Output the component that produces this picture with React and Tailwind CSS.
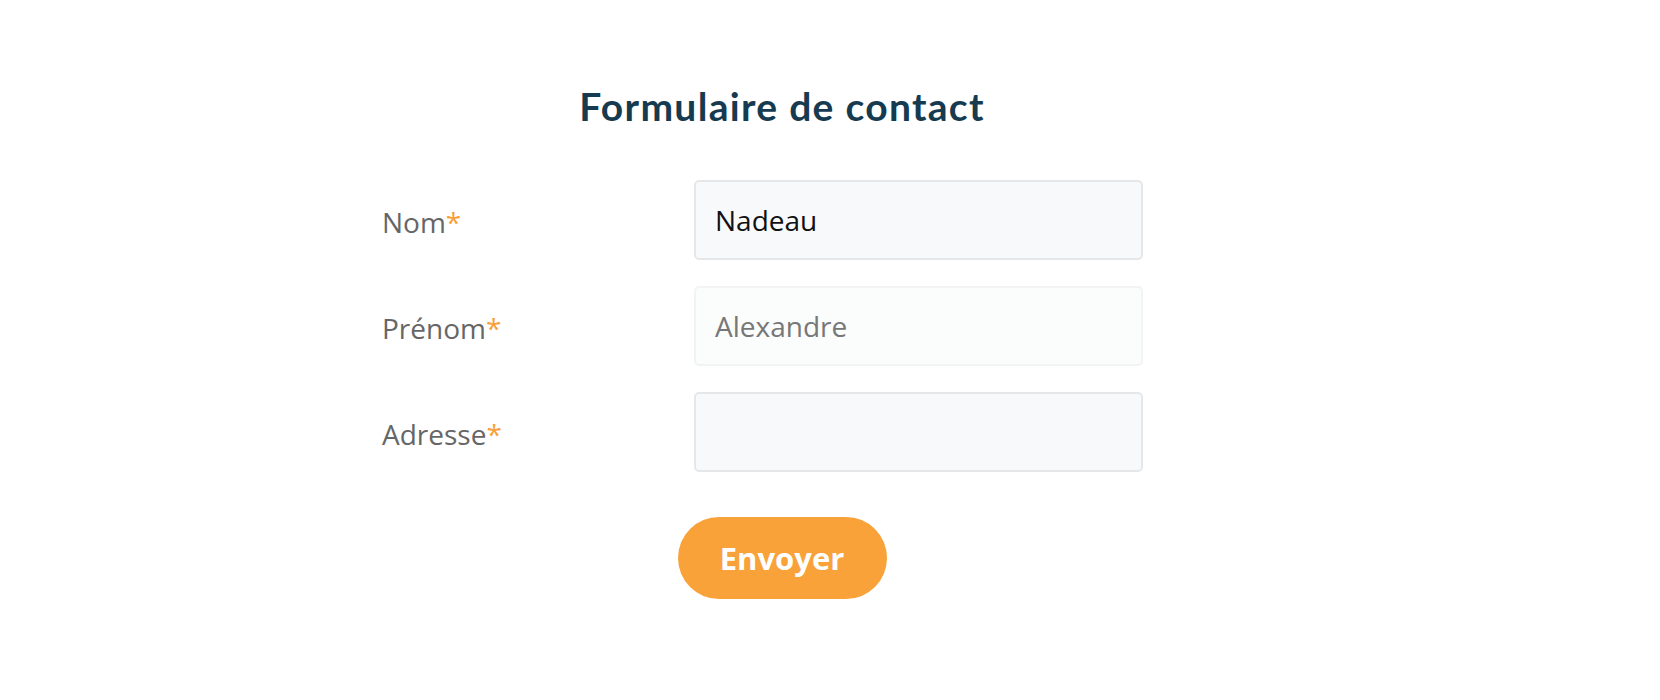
import React from "react";

const fields = [
  { label: "Nom", value: "Nadeau", placeholder: "", muted: false },
  { label: "Prénom", value: "", placeholder: "Alexandre", muted: true },
  { label: "Adresse", value: "", placeholder: "", muted: false },
];

const App = () => {
  return (
    <div className="min-h-[700px] w-full bg-white font-['Open_Sans',sans-serif]">
      <div className="ml-[382px] w-[800px] pt-[80px]">
        <h1 className="text-center font-['Lato',sans-serif] text-[39px] font-bold leading-[52px] tracking-[1.3px] text-[#163a4f]">
          Formulaire de contact
        </h1>

        <form
          className="mt-[48px] flex flex-col gap-[26px]"
          onSubmit={(e) => e.preventDefault()}
        >
          {fields.map((f) => (
            <div key={f.label} className="grid grid-cols-[312px_449px] items-center">
              <label className="pt-[4px] text-[28px] text-[#666666]">
                {f.label}
                <span className="text-[#f9a03a]">*</span>
              </label>
              <input
                defaultValue={f.value}
                placeholder={f.placeholder}
                className={`h-[80px] w-full rounded-[5px] border-2 px-[19px] text-[28px] text-[#111] outline-none placeholder:text-[#777] ${
                  f.muted
                    ? "border-[#f2f3f4] bg-[#fbfcfc]"
                    : "border-[#e6e7e9] bg-[#f8f9fa]"
                }`}
              />
            </div>
          ))}

          <div className="mt-[19px] flex justify-center">
            <button
              type="submit"
              className="h-[82px] w-[209px] rounded-full bg-[#f9a23a] text-[31px] font-bold text-white"
            >
              Envoyer
            </button>
          </div>
        </form>
      </div>
    </div>
  );
};

export default App;
